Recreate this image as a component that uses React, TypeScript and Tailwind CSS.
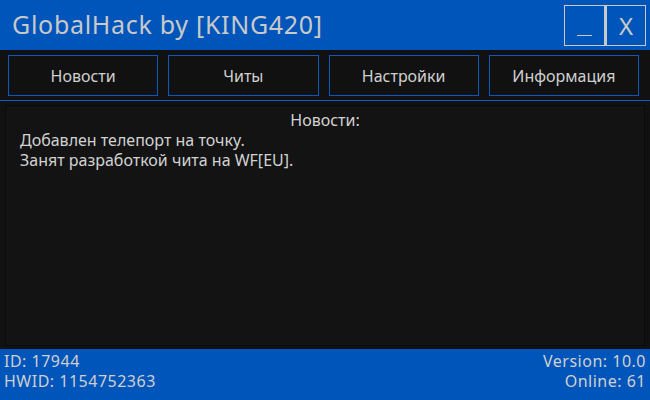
import React from 'react';

const tabs = ['Новости', 'Читы', 'Настройки', 'Информация'];

export default function App() {
  return (
    <div className="w-[650px] h-[400px] flex flex-col bg-[#111111] text-[#d2d2d2] font-['Noto_Sans',sans-serif] overflow-hidden">
      {/* title bar */}
      <div className="h-[50px] bg-[#0055ba] flex items-center justify-between pl-[12px] pr-[4px]">
        <span className="text-[25px] leading-none text-[#c9c9c9] tracking-[0.7px] -mt-[2px]">GlobalHack by [KING420]</span>
        <div className="flex self-start mt-[5px]">
          <button className="w-[41px] h-[41px] border border-[#c9c9c9] flex items-end justify-center pb-[9px]">
            <span className="block w-[15px] h-[1px] bg-[#c9c9c9]" />
          </button>
          <button className="w-[41px] h-[41px] border border-l-2 border-[#c9c9c9] text-[#c9c9c9] text-[24px] leading-none flex items-center justify-center">
            X
          </button>
        </div>
      </div>

      {/* tabs */}
      <div className="h-[50px] grid grid-cols-4 gap-[10px] pl-[8px] pr-[11px] pt-[5px] pb-[4px]">
        {tabs.map((t) => (
          <button
            key={t}
            className="border border-[#0a58c0] bg-[#111111] text-[16px] text-[#d0d0d0] flex items-center justify-center"
          >
            {t}
          </button>
        ))}
      </div>
      <div className="h-[1px] bg-[#0a5bc8]" />

      {/* content */}
      <div className="flex-1 px-[5px] pt-[4px] pb-[3px]">
        <div className="h-full border border-[#0a0a0a] bg-[#131313] px-[14px] pt-[4px] text-[16px] leading-[20px]">
          <div className="text-center">Новости:</div>
          <div>Добавлен телепорт на точку.</div>
          <div>Занят разработкой чита на WF[EU].</div>
        </div>
      </div>

      {/* status bar */}
      <div className="h-[51px] bg-[#0055ba] flex justify-between px-[4px] pt-[2px] text-[16px] leading-[20px] tracking-[0.5px] text-[#d0d0d0]">
        <div>
          <div>ID: 17944</div>
          <div>HWID: 1154752363</div>
        </div>
        <div className="text-right">
          <div>Version: 10.0</div>
          <div>Online: 61</div>
        </div>
      </div>
    </div>
  );
}
